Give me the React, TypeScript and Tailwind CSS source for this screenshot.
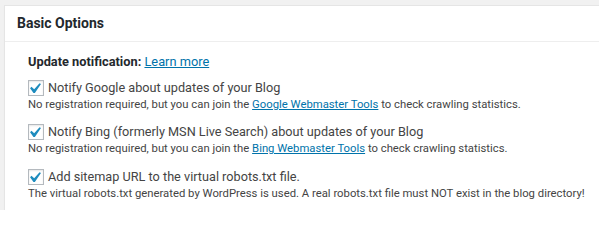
import React from "react";

function Check() {
  return (
    <span className="relative inline-block w-[16px] h-[16px] shrink-0 border border-[#b4b9be] bg-white shadow-[inset_0_1px_2px_rgba(0,0,0,0.1)]">
      <svg
        className="absolute left-[-5px] top-[-3px] w-[21px] h-[21px]"
        viewBox="0 0 20 20"
        fill="#1e8cbe"
      >
        <path d="M14.83 4.89l1.34.94-5.81 8.38H9.02L5.78 9.67l1.34-1.25 2.57 2.4z" />
      </svg>
    </span>
  );
}

function Option({
  label,
  children,
  mt,
}: {
  label: string;
  children: React.ReactNode;
  mt: string;
}) {
  return (
    <div className={mt}>
      <div className="flex items-center h-[16px]">
        <Check />
        <span className="ml-[4px] text-[12.7px] leading-[16px] text-[#444] whitespace-nowrap">
          {label}
        </span>
      </div>
      <div className="text-[11.3px] leading-[17px] text-[#444] whitespace-nowrap">
        {children}
      </div>
    </div>
  );
}

export default function App() {
  return (
    <div className="h-[210px] overflow-hidden bg-[#f1f1f1] pl-[4px] pt-[5px] font-['Roboto','Liberation_Sans',sans-serif]">
      <div className="w-[640px] h-[220px] bg-white border border-[#e5e5e5] shadow-[0_1px_1px_rgba(0,0,0,0.04)]">
        <div className="h-[36px] border-b border-[#eeeeee] pl-[12px] flex items-center">
          <h2 className="text-[14px] font-bold text-[#23282d]">Basic Options</h2>
        </div>
        <div className="pl-[23px] pt-[10px]">
          <div className="text-[12.8px] leading-[20px] text-[#444]">
            <span className="font-bold text-[#23282d]">Update notification:</span>{" "}
            <a className="text-[#0073aa] underline" href="#">
              Learn more
            </a>
          </div>
          <Option mt="mt-[8px]" label="Notify Google about updates of your Blog">
            No registration required, but you can join the{" "}
            <a className="text-[#0073aa] underline" href="#">
              Google Webmaster Tools
            </a>{" "}
            to check crawling statistics.
          </Option>
          <Option
            mt="mt-[11px]"
            label="Notify Bing (formerly MSN Live Search) about updates of your Blog"
          >
            No registration required, but you can join the{" "}
            <a className="text-[#0073aa] underline" href="#">
              Bing Webmaster Tools
            </a>{" "}
            to check crawling statistics.
          </Option>
          <Option mt="mt-[12px]" label="Add sitemap URL to the virtual robots.txt file.">
            The virtual robots.txt generated by WordPress is used. A real robots.txt
            file must NOT exist in the blog directory!
          </Option>
        </div>
      </div>
    </div>
  );
}
